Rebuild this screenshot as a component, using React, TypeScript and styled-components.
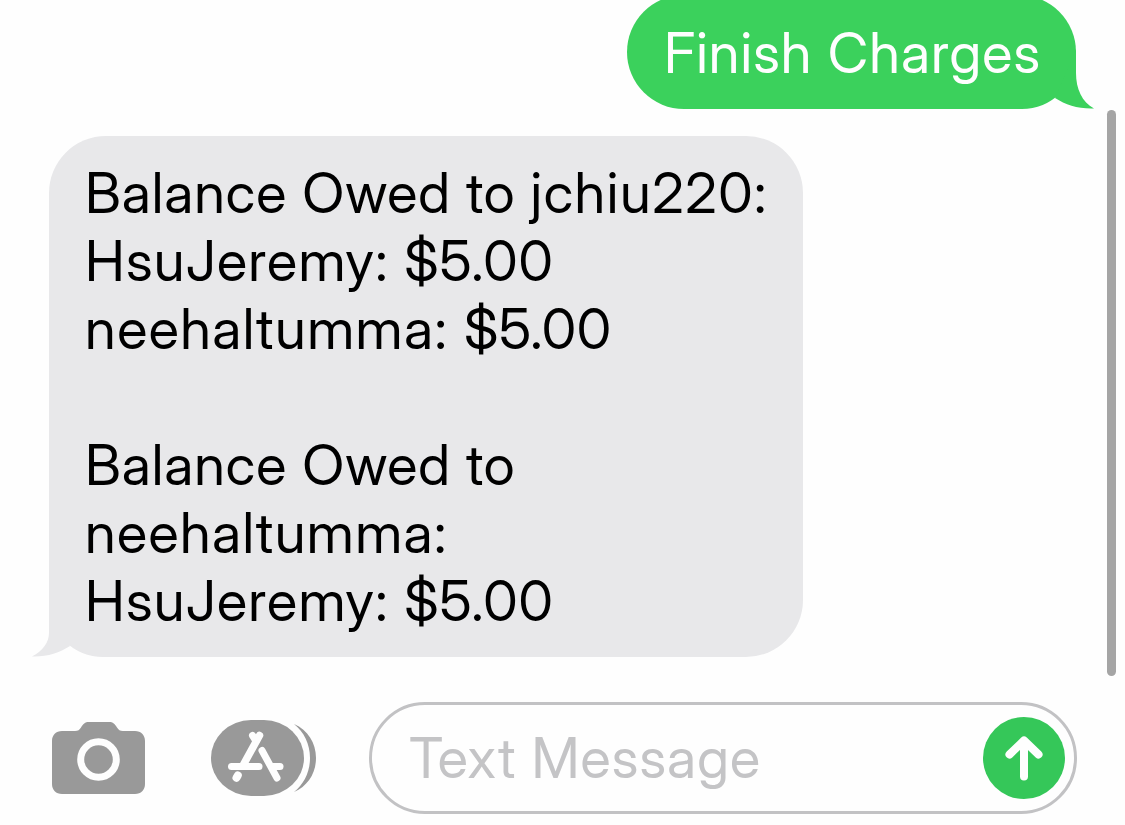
import React from "react";
import styled, { createGlobalStyle } from "styled-components";

type Line = { text: string; tracking: number; end?: string; endTracking?: number };

const balance: Line[] = [
	{ text: "Balance Owed to ", tracking: 1, end: "jchiu220:", endTracking: 1.6 },
	{ text: "HsuJeremy: ", tracking: 1.3, end: "$5.00", endTracking: 0.95 },
	{ text: "neehaltumma: ", tracking: 1.5, end: "$5.00", endTracking: 0.6 },
	{ text: "", tracking: 0 },
	{ text: "Balance Owed to", tracking: 1 },
	{ text: "neehaltumma:", tracking: 1.45 },
	{ text: "HsuJeremy: ", tracking: 1.3, end: "$5.00", endTracking: 0.95 },
];

const App = () => {
	return (
		<Screen>
			<GlobalStyle />
			<Thread>
				<Messages>
					<Sent>
						<Text $tracking={1.1}>Finish Charges</Text>
						<SentTail viewBox='0 0 60 60'>
							<path d='M41 0V24C41 40 47 53 59 59.5C43 60 31 56 20 49Z' />
						</SentTail>
					</Sent>
					<Received>
						{balance.map((line, i) => (
							<Text key={i} $tracking={line.tracking}>
								{line.text}
								{line.end && <End $tracking={line.endTracking ?? 0}>{line.end}</End>}
							</Text>
						))}
						<ReceivedTail viewBox='0 0 60 60'>
							<path d='M18 0V36C18 45 12 54 1 59.5C16 60 28 56 39 49Z' />
						</ReceivedTail>
					</Received>
				</Messages>
				<Scrollbar />
			</Thread>

			<Toolbar>
				<CameraIcon viewBox='0 0 94 74'>
					<path
						fill='#999'
						d='M10 9H23C26 9 27.500 8 29 5.500C31 2 33 0 37 0H57C61 0 63 2 65 5.500C66.500 8 68 9 71 9H83C89 9 93 13 93 19V62C93 68 89 72 83 72H10C4 72 0 68 0 62V19C0 13 4 9 10 9Z'
					/>
					<circle cx='46.500' cy='37.500' r='17.800' fill='none' stroke='#fefefe' strokeWidth='7' />
				</CameraIcon>
				<StoreIcon viewBox='0 0 106 76'>
					<rect width='93' height='76' rx='40' ry='38' fill='#999' />
					<path fill='#999' d='M83 4C97 10 105 23 105 38C105 53 97 66 83 72C93 64 99 52 99 38C99 24 93 12 83 4Z' />
					<g stroke='#fefefe' strokeWidth='7' strokeLinecap='round' fill='none'>
						<path d='M41.500 15.500L45 21' />
						<path d='M48.500 15.500L32.500 44.500' strokeWidth='7.500' />
						<path d='M20.500 46.500H48' />
						<path d='M62 46.500H69' />
						<path d='M51 30.500L66 58' />
						<path d='M26.800 55.500L25.500 57.700' strokeWidth='8' />
					</g>
				</StoreIcon>
				<Field>
					<Placeholder $tracking={1.1}>Text Message</Placeholder>
					<SendButton>
						<svg width='82' height='82' viewBox='0 0 82 82'>
							<path
								d='M41 59.500V24M26.500 37.500L41 23.500L55.500 37.500'
								fill='none'
								stroke='#fefefe'
								strokeWidth='8'
								strokeLinecap='round'
								strokeLinejoin='round'
							/>
						</svg>
					</SendButton>
				</Field>
			</Toolbar>
		</Screen>
	);
};

export default App;

const GlobalStyle = createGlobalStyle`
	body {
		margin: 0;
		background-color: #fefefe;
	}

	* {
		box-sizing: border-box;
	}
`;

const Screen = styled.div`
	width: 1125px;
	height: 825px;
	display: flex;
	flex-direction: column;
	overflow: hidden;
	background-color: #fefefe;
	font-family: "Inter Display", Inter, "Liberation Sans", sans-serif;
`;

const Thread = styled.div`
	height: 702px;
	display: flex;
	justify-content: space-between;
	padding-right: 9px;
`;

const Messages = styled.div`
	width: 1076px;
	display: flex;
	flex-direction: column;
	padding-left: 49px;
`;

const Text = styled.div<{ $tracking: number }>`
	height: 68px;
	font-size: 56px;
	line-height: 68px;
	letter-spacing: ${(props) => props.$tracking}px;
	white-space: pre;
`;

const End = styled.span<{ $tracking: number }>`
	letter-spacing: ${(props) => props.$tracking}px;
`;

const Bubble = styled.div`
	position: relative;
	border-radius: 57px;
`;

const Sent = styled(Bubble)`
	align-self: flex-end;
	width: 449px;
	height: 114px;
	margin-top: -5px;
	padding: 24px 0 0 37px;
	border-bottom-right-radius: 54px;
	background-color: #3bd15c;
	color: #fefefe;
`;

const Received = styled(Bubble)`
	width: 754px;
	height: 521px;
	margin-top: 27px;
	padding: 23px 0 0 36px;
	border-bottom-left-radius: 54px;
	background-color: #e8e8ea;
	color: #000;
`;

const Tail = styled.svg`
	position: absolute;
	bottom: 0;
	width: 60px;
	height: 60px;
`;

const SentTail = styled(Tail)`
	right: -19px;
	fill: #3bd15c;
`;

const ReceivedTail = styled(Tail)`
	left: -18px;
	fill: #e8e8ea;
`;

const Scrollbar = styled.div`
	width: 9px;
	height: 566px;
	margin-top: 110px;
	border-radius: 5px;
	background-color: #a5a5a5;
`;

const Toolbar = styled.div`
	display: flex;
	align-items: flex-start;
	padding-left: 52px;
`;

const CameraIcon = styled.svg`
	width: 94px;
	height: 74px;
	margin-top: 20px;
`;

const StoreIcon = styled.svg`
	width: 106px;
	height: 76px;
	margin: 18px 52px 0 65px;
`;

const Field = styled.div`
	width: 708px;
	height: 112px;
	display: flex;
	align-items: center;
	justify-content: space-between;
	padding: 0 9px 0 37px;
	border: 3px solid #c2c2c4;
	border-radius: 56px;
`;

const Placeholder = styled(Text)`
	color: #c4c4c6;
`;

const SendButton = styled.button`
	width: 82px;
	height: 82px;
	display: flex;
	padding: 0;
	border: none;
	border-radius: 50%;
	background-color: #35c759;
	cursor: pointer;
`;
